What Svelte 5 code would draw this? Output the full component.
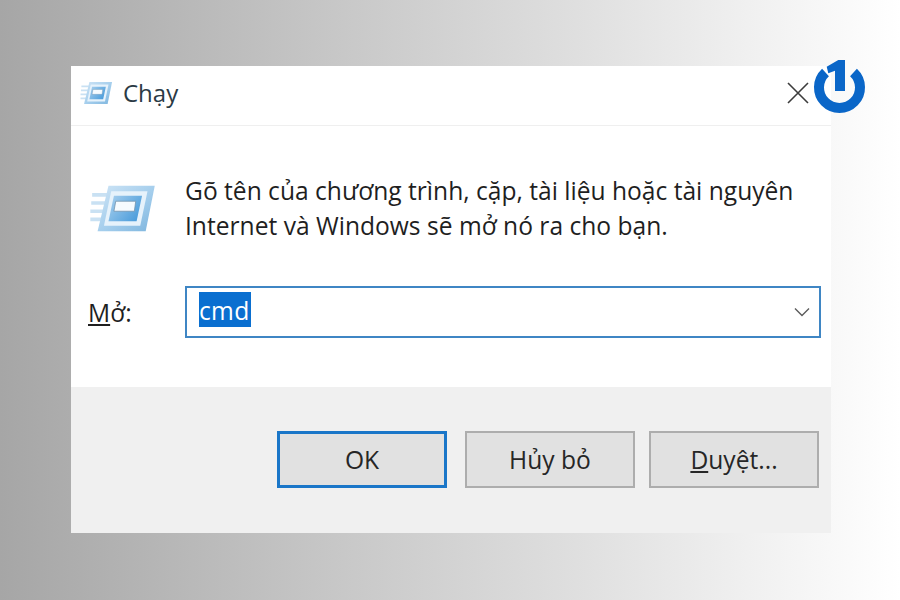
<script lang="ts">
  const title = "Chạy";
</script>

{#snippet runIcon(w: number, h: number)}
  <svg width={w} height={h} viewBox="0 0 72 54" aria-hidden="true">
    <defs>
      <linearGradient id="runFrame" x1="0" y1="0" x2="1" y2="1">
        <stop offset="0" stop-color="#cfe5f6" />
        <stop offset="0.55" stop-color="#a3cdec" />
        <stop offset="1" stop-color="#7db5de" />
      </linearGradient>
      <linearGradient id="runInner" x1="0" y1="0" x2="1" y2="0.6">
        <stop offset="0" stop-color="#a9d0ee" />
        <stop offset="1" stop-color="#4f9fdc" />
      </linearGradient>
    </defs>
    <path d="M2 12h18M1 21h16M0 30h15M0 39h13" stroke="#c9e1f3" stroke-width="4" fill="none" />
    <path d="M20 2H71L61 52H8Z" fill="url(#runFrame)" />
    <path d="M23 8H63L55 46H15Z" fill="#e6f2fb" />
    <path d="M26 13H57L51 41H20Z" fill="url(#runInner)" />
    <path d="M28 19H50L48.500 30H26Z" fill="#f6fbff" stroke="#6f8ea6" stroke-width="0.800" />
  </svg>
{/snippet}

<div class="page">
  <div class="dialog">
    <header class="titlebar">
      <span class="title-icon">{@render runIcon(33, 24)}</span>
      <span class="title">{title}</span>
      <svg class="close" width="24" height="24" viewBox="0 0 24 24" aria-hidden="true">
        <path d="M2 2L22 22M22 2L2 22" stroke="#3c3c3c" stroke-width="1.6" fill="none" />
      </svg>
    </header>

    <div class="content">
      <div class="intro">
        <span class="intro-icon">{@render runIcon(70, 49)}</span>
        <p>Gõ tên của chương trình, cặp, tài liệu hoặc tài nguyên<br />Internet và Windows sẽ mở nó ra cho bạn.</p>
      </div>
      <div class="open-row">
        <span class="open-label"><u>M</u>ở:</span>
        <div class="combo">
          <span class="selected">cmd</span>
          <svg width="16" height="10" viewBox="0 0 16 10" aria-hidden="true">
            <path d="M1 1.500L8 8.500L15 1.500" stroke="#5c5c5c" stroke-width="1.400" fill="none" />
          </svg>
        </div>
      </div>
    </div>

    <footer class="actions">
      <button class="default">OK</button>
      <button>Hủy bỏ</button>
      <button><u>D</u>uyệt...</button>
    </footer>
  </div>

  <svg class="logo" width="54" height="54" viewBox="0 0 54 54" aria-hidden="true">
    <path d="M12.500 12.500A20.500 20.500 0 1 0 40.500 12.500" stroke="#0a66c8" stroke-width="10" fill="none" />
    <path d="M13.700 6.700L25.300 0H32V31H22V10.700L15.300 13.300Z" fill="#0a66c8" />
  </svg>
</div>

<style>
  :global(body) {
    margin: 0;
  }

  .page {
    position: relative;
    box-sizing: border-box;
    width: 900px;
    height: 600px;
    padding: 66px 0 0 71px;
    background: linear-gradient(90deg, #a6a6a6 0%, #ffffff 100%);
    font-family: "Open Sans", "Noto Sans", sans-serif;
    color: #1f1f1f;
    overflow: hidden;
  }

  .dialog {
    display: flex;
    flex-direction: column;
    width: 760px;
    height: 467px;
    background: #fff;
  }

  .titlebar {
    display: flex;
    align-items: center;
    gap: 10px;
    box-sizing: border-box;
    height: 60px;
    padding: 0 21px 6px 9px;
    border-bottom: 1px solid #efefef;
  }
  .title-icon {
    display: flex;
  }
  .title {
    flex: 1;
    font-size: 24px;
    color: #2b3a45;
  }

  .content {
    flex: 1;
    padding: 47px 10px 0 17px;
  }

  .intro {
    display: flex;
    gap: 27px;
  }
  .intro-icon {
    display: flex;
    padding-top: 11px;
  }
  .intro p {
    margin: 0;
    font-size: 24.600px;
    line-height: 35px;
  }

  .open-row {
    display: flex;
    align-items: center;
    margin-top: 43px;
  }
  .open-label {
    width: 97px;
    font-size: 24.600px;
  }
  .combo {
    display: flex;
    flex: 1;
    align-items: center;
    justify-content: space-between;
    box-sizing: border-box;
    height: 52px;
    padding: 0 9px 0 12px;
    border: 2px solid #3f86c4;
  }
  .selected {
    margin-bottom: 5px;
    padding: 3px 1px 0 0;
    background: #0a6fd0;
    color: #fff;
    font-size: 24.600px;
    line-height: 32px;
    letter-spacing: 0.3px;
  }

  .actions {
    display: flex;
    justify-content: flex-end;
    gap: 14px;
    box-sizing: border-box;
    height: 146px;
    padding: 44px 12px 0 0;
    background: #f0f0f0;
  }
  button {
    box-sizing: border-box;
    width: 170px;
    height: 57px;
    border: 2px solid #adadad;
    background: #e1e1e1;
    color: #262626;
    font: inherit;
    font-size: 24.600px;
  }
  .default {
    margin-right: 4px;
    border: 3px solid #1a76c8;
  }

  .logo {
    position: absolute;
    top: 60px;
    left: 813px;
  }
</style>
